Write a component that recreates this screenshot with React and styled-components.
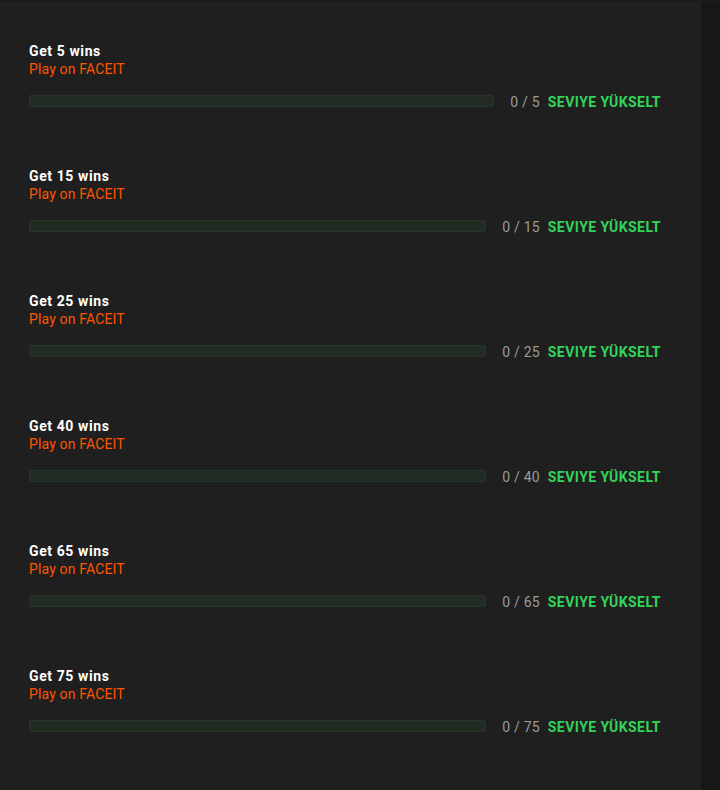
import React from 'react';
import styled, { createGlobalStyle } from 'styled-components';

const GlobalStyle = createGlobalStyle`
  html, body {
    margin: 0;
    padding: 0;
    background-color: #171717;
  }
  body {
    font-family: 'Roboto', 'Liberation Sans', sans-serif;
  }
`;

const Page = styled.div`
  display: flex;
  width: 720px;
  min-height: 790px;
  border-top: 2px solid #1a1a1a;
  box-sizing: border-box;
`;

const Panel = styled.section`
  width: 701px;
  background-color: #1f1f1f;
  padding: 40px 40px 0 29px;
  box-sizing: border-box;
`;

const Mission = styled.div`
  margin-bottom: 54px;
`;

const Title = styled.div`
  color: #ffffff;
  font-size: 14px;
  font-weight: 700;
  line-height: 18px;
  letter-spacing: 0.6px;
`;

const Subtitle = styled.div`
  color: #ff5500;
  font-size: 14px;
  line-height: 18px;
  letter-spacing: 0.15px;
`;

const ProgressRow = styled.div`
  display: flex;
  align-items: center;
  height: 24px;
  margin-top: 11px;
`;

const Track = styled.div`
  flex: 1;
  height: 12px;
  background-color: #222c23;
  border: 1px solid #28352a;
  border-radius: 2px;
  box-sizing: border-box;
`;

const Count = styled.span`
  color: #9b9b9b;
  font-size: 14px;
  margin: 0 8px 0 16px;
  padding-top: 2px;
  letter-spacing: 0.2px;
`;

const LevelUp = styled.button`
  background: none;
  border: none;
  padding: 2px 0 0;
  color: #32d35a;
  font-family: inherit;
  font-size: 14px;
  font-weight: 700;
  letter-spacing: 0.45px;
  cursor: pointer;
`;

const goals = [5, 15, 25, 40, 65, 75];

export default function App() {
  return (
    <>
      <GlobalStyle />
      <Page>
        <Panel>
          {goals.map((n) => (
            <Mission key={n}>
              <Title>Get {n} wins</Title>
              <Subtitle>Play on FACEIT</Subtitle>
              <ProgressRow>
                <Track />
                <Count>0 / {n}</Count>
                <LevelUp>SEVIYE YÜKSELT</LevelUp>
              </ProgressRow>
            </Mission>
          ))}
        </Panel>
      </Page>
    </>
  );
}
